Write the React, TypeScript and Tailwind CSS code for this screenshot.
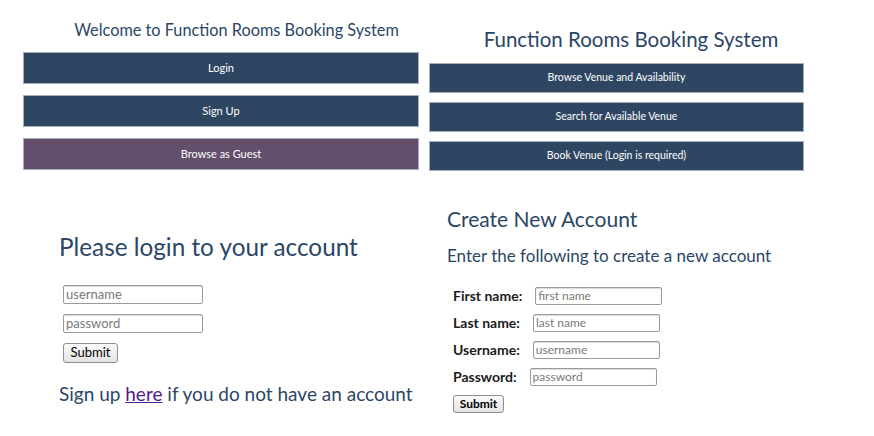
import React from "react";

const navy = "bg-[#2e4662]";

function NavButton({ label, purple = false, h }: { label: string; purple?: boolean; h: string }) {
  return (
    <button
      type="button"
      className={`w-full ${h} ${purple ? "bg-[#634e6b]" : navy} border border-[#a3aebd] text-white flex items-center justify-center`}
    >
      {label}
    </button>
  );
}

function Field({ placeholder, w, text }: { placeholder: string; w: string; text: string }) {
  return (
    <input
      type="text"
      placeholder={placeholder}
      className={`${w} ${text} bg-white border border-[#9a9a9a] rounded-[2px] shadow-[inset_0_1px_1px_rgba(0,0,0,0.15)] px-[2px] font-normal text-black placeholder:text-[#7a7a7a] outline-none`}
    />
  );
}

function SubmitBtn({ w, h, text }: { w: string; h: string; text: string }) {
  return (
    <button
      type="button"
      className={`${w} ${h} ${text} bg-gradient-to-b from-[#fbfbfb] to-[#e3e3e3] border border-[#8e8e8e] rounded-[3px] text-black flex items-center justify-center`}
    >
      Submit
    </button>
  );
}

export default function App() {
  return (
    <div className="w-[874px] h-[436px] bg-white overflow-hidden font-['Lato',sans-serif] text-[#2b4666]">
      <div className="grid grid-cols-[429px_445px] grid-rows-[185px_251px] h-full">
        {/* Top-left */}
        <section className="pl-[23px] pt-[19px]">
          <div className="w-[396px]">
            <h1 className="pl-[31px] text-center text-[16.3px] leading-[22px] whitespace-nowrap">
              Welcome to Function Rooms Booking System
            </h1>
            <div className="mt-[11px] flex flex-col gap-[11px] text-[11px]">
              <NavButton label="Login" h="h-[32px]" />
              <NavButton label="Sign Up" h="h-[32px]" />
              <NavButton label="Browse as Guest" h="h-[32px]" purple />
            </div>
          </div>
        </section>

        {/* Top-right */}
        <section className="pt-[27px]">
          <div className="w-[375px]">
            <h1 className="pl-[29px] text-center text-[20.5px] leading-[24px] whitespace-nowrap">
              Function Rooms Booking System
            </h1>
            <div className="mt-[12px] flex flex-col gap-[9px] text-[10.5px]">
              <NavButton label="Browse Venue and Availability" h="h-[30px]" />
              <NavButton label="Search for Available Venue" h="h-[30px]" />
              <NavButton label="Book Venue (Login is required)" h="h-[30px]" />
            </div>
          </div>
        </section>

        {/* Bottom-left */}
        <section className="pl-[59px] pt-[48px]">
          <h2 className="text-[24.3px] leading-[28px] whitespace-nowrap">Please login to your account</h2>
          <div className="mt-[24px] pl-[4px] flex flex-col gap-[10px]">
            <div className="h-[19px] flex">
              <Field placeholder="username" w="w-[140px]" text="text-[13px]" />
            </div>
            <div className="h-[19px] flex">
              <Field placeholder="password" w="w-[140px]" text="text-[13px]" />
            </div>
            <SubmitBtn w="w-[55px]" h="h-[20px]" text="text-[13px]" />
          </div>
          <p className="mt-[20px] text-[19px] leading-[22px] whitespace-nowrap">
            Sign up{" "}
            <a href="#" className="text-[#551a8b] underline">
              here
            </a>{" "}
            if you do not have an account
          </p>
        </section>

        {/* Bottom-right */}
        <section className="pl-[18px] pt-[21px]">
          <h2 className="text-[21px] leading-[26px] whitespace-nowrap">Create New Account</h2>
          <h3 className="mt-[13px] text-[17px] leading-[22px] whitespace-nowrap">
            Enter the following to create a new account
          </h3>
          <div className="mt-[20px] pl-[6px] flex flex-col gap-[9px] text-[14px] font-bold text-[#1c1c1c]">
            {[
              ["First name:", "first name"],
              ["Last name:", "last name"],
              ["Username:", "username"],
              ["Password:", "password"],
            ].map(([label, ph]) => (
              <div key={label} className="h-[18px] flex items-center gap-[13px] whitespace-nowrap">
                <span className="leading-[18px]">{label}</span>
                <div className="h-[18px] flex">
                  <Field placeholder={ph} w="w-[127px]" text="text-[12px]" />
                </div>
              </div>
            ))}
            <SubmitBtn w="w-[51px]" h="h-[18px]" text="text-[12px] font-bold" />
          </div>
        </section>
      </div>
    </div>
  );
}
